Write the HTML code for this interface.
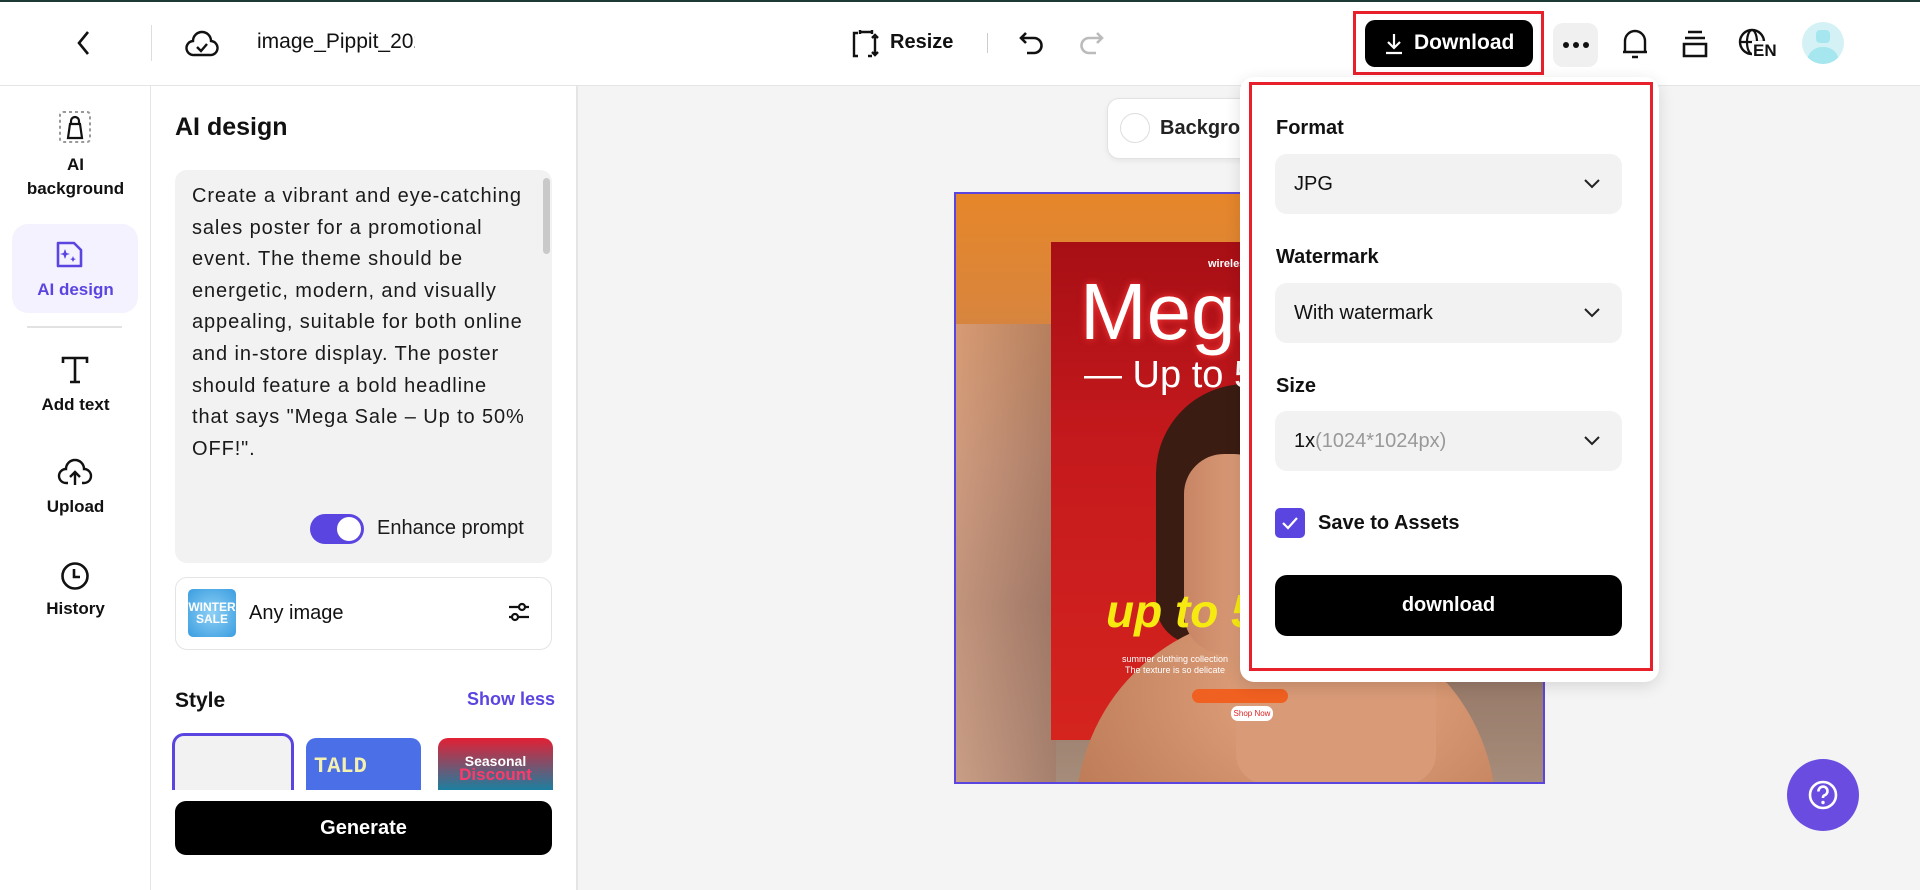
<!DOCTYPE html>
<html><head><meta charset="utf-8"><style>
*{box-sizing:border-box;margin:0;padding:0}
body{width:1920px;height:890px;overflow:hidden;background:#fff;font-family:"Liberation Sans",Arial,sans-serif;color:#111;position:relative}
.a{position:absolute}
.t{position:absolute;white-space:nowrap}
svg{position:absolute;overflow:visible}
.lbl{font-size:20px;font-weight:bold;color:#111}
.sel{position:absolute;left:1275px;width:347px;height:60px;background:#f2f2f2;border-radius:12px;font-size:20px;padding-left:19px;line-height:60px}
.rail{position:absolute;width:151px;text-align:center;font-size:17px;font-weight:bold;color:#111}
</style></head><body>
<div class="a" style="left:0;top:0;width:1920px;height:2px;background:#1e3a36"></div>
<div class="a" style="left:0;top:85px;width:1920px;height:1px;background:#e5e5e5"></div>
<!-- top bar -->
<svg style="left:74px;top:30px" width="20" height="26" viewBox="0 0 20 26"><path d="M14 2 L5 13 L14 24" fill="none" stroke="#111" stroke-width="2.6"/></svg>
<div class="a" style="left:151px;top:25px;width:1px;height:36px;background:#ddd"></div>
<svg style="left:185px;top:28px" width="34" height="30" viewBox="0 0 34 30"><path d="M9 27 H25 A7 7 0 0 0 26 13 A9 9 0 0 0 8 13 A7 7 0 0 0 9 27Z" fill="none" stroke="#111" stroke-width="2.4"/><path d="M12 19 L16 23 L22 16" fill="none" stroke="#111" stroke-width="2.4"/></svg>
<div class="t" style="left:257px;top:30px;font-size:21px;width:158px;overflow:hidden">image_Pippit_2025</div>
<svg style="left:850px;top:29px" width="30" height="30" viewBox="0 0 30 30"><path d="M8 4 H4 V27 H8 M4 4 M10 3 H22 M10 1 V5 M22 1 V5 M25 8 V26 M22 9 L25 6 L28 9 M22 23 L25 26 L28 23 M18 27 H22" fill="none" stroke="#111" stroke-width="2.4"/></svg>
<div class="t" style="left:890px;top:31px;font-size:20px;font-weight:bold">Resize</div>
<div class="a" style="left:987px;top:33px;width:1px;height:20px;background:#ccc"></div>
<svg style="left:1018px;top:30px" width="28" height="26" viewBox="0 0 28 26"><path d="M8 3 L3 8 L8 13 M3 8 H16 A7.5 7.5 0 0 1 16 23 H9" fill="none" stroke="#111" stroke-width="2.6"/></svg>
<svg style="left:1077px;top:30px" width="28" height="26" viewBox="0 0 28 26"><path d="M20 3 L25 8 L20 13 M25 8 H12 A7.5 7.5 0 0 0 12 23 H19" fill="none" stroke="#bbb" stroke-width="2.6"/></svg>
<div class="a" style="left:1353px;top:11px;width:191px;height:64px;border:3px solid #e8202c"></div>
<div class="a" style="left:1365px;top:20px;width:168px;height:47px;background:#000;border-radius:10px"></div>
<svg style="left:1384px;top:33px" width="20" height="22" viewBox="0 0 20 22"><path d="M10 1 V15 M4 9 L10 15 L16 9 M2 20 H18" fill="none" stroke="#fff" stroke-width="2.2"/></svg>
<div class="t" style="left:1414px;top:31px;font-size:21px;font-weight:bold;color:#fff">Download</div>
<div class="a" style="left:1553px;top:23px;width:45px;height:44px;background:#f0f0f0;border-radius:10px"></div>
<div class="a" style="left:1563px;top:42px;width:6px;height:6px;border-radius:3px;background:#111;box-shadow:10px 0 #111,20px 0 #111"></div>
<svg style="left:1619px;top:26px" width="32" height="34" viewBox="0 0 32 34"><path d="M6 26 V15 A10 10 0 0 1 26 15 V26 H4 H28 M13 31 H19" fill="none" stroke="#111" stroke-width="2.4"/></svg>
<svg style="left:1680px;top:29px" width="30" height="30" viewBox="0 0 30 30"><path d="M8 3 H22 M5 9 H25 M4 15 H26 V27 H4 Z" fill="none" stroke="#111" stroke-width="2.6"/></svg>
<svg style="left:1737px;top:27px" width="34" height="34" viewBox="0 0 34 34"><circle cx="15" cy="15" r="12" fill="none" stroke="#111" stroke-width="2.4"/><ellipse cx="15" cy="15" rx="5" ry="12" fill="none" stroke="#111" stroke-width="2.2"/><path d="M3 15 H27" stroke="#111" stroke-width="2.2"/></svg>
<div class="t" style="left:1752px;top:41px;font-size:17px;font-weight:bold;background:#fff;padding:0 1px">EN</div>
<div class="a" style="left:1802px;top:22px;width:42px;height:42px;border-radius:21px;background:#d4f2f5;overflow:hidden"><div class="a" style="left:14px;top:8px;width:14px;height:13px;background:#a6e6ef;border-radius:4px"></div><div class="a" style="left:5px;top:25px;width:32px;height:30px;background:#a6e6ef;border-radius:16px"></div></div>
<!-- left rail -->
<div class="a" style="left:150px;top:86px;width:1px;height:804px;background:#e5e5e5"></div>
<svg style="left:58px;top:110px" width="34" height="34" viewBox="0 0 34 34"><rect x="2" y="2" width="30" height="30" rx="3" fill="none" stroke="#999" stroke-width="2" stroke-dasharray="3 3"/><path d="M10 28 L12 14 H22 L24 28 Z M13 14 V11 A4 4 0 0 1 21 11 V14" fill="none" stroke="#111" stroke-width="2.2"/></svg>
<div class="rail" style="left:0;top:153px;line-height:24px">AI<br>background</div>
<div class="a" style="left:12px;top:224px;width:126px;height:89px;background:#f4f2ff;border-radius:16px"></div>
<svg style="left:54px;top:240px" width="30" height="30" viewBox="0 0 30 30"><path d="M4 3 H20 L27 10 V26 H4 Z" fill="none" stroke="#5b45e0" stroke-width="2.6" stroke-linejoin="round"/><path d="M11 9 L12.5 13 L16 14 L12.5 15 L11 19 L9.5 15 L6 14 L9.5 13 Z M19 16 L20 18.5 L22 19 L20 20 L19 22 L18 20 L16 19 L18 18.5Z" fill="#5b45e0"/></svg>
<div class="rail" style="left:0;top:280px;color:#5b45e0">AI design</div>
<div class="a" style="left:27px;top:326px;width:95px;height:2px;background:#e2e2e2"></div>
<svg style="left:60px;top:355px" width="30" height="30" viewBox="0 0 30 30"><path d="M3 8 V3 H27 V8 M15 3 V27 M10 27 H20" fill="none" stroke="#111" stroke-width="2.6"/></svg>
<div class="rail" style="left:0;top:395px">Add text</div>
<svg style="left:58px;top:458px" width="34" height="30" viewBox="0 0 34 30"><path d="M10 25 H8 A7 7 0 0 1 8 11 A9 9 0 0 1 26 11 A7 7 0 0 1 26 25 H24 M17 27 V15 M12 19 L17 14 L22 19" fill="none" stroke="#111" stroke-width="2.4"/></svg>
<div class="rail" style="left:0;top:497px">Upload</div>
<svg style="left:59px;top:560px" width="32" height="32" viewBox="0 0 32 32"><circle cx="16" cy="16" r="12.5" fill="none" stroke="#111" stroke-width="2.6"/><path d="M15 9 V17 H21" fill="none" stroke="#111" stroke-width="2.6"/></svg>
<div class="rail" style="left:0;top:599px">History</div>
<!-- panel -->
<div class="a" style="left:577px;top:86px;width:1343px;height:804px;background:#f4f4f4;border-left:1px solid #e5e5e5"></div>
<div class="t" style="left:175px;top:113px;font-size:25px;font-weight:bold">AI design</div>
<div class="a" style="left:175px;top:170px;width:377px;height:393px;background:#f2f2f2;border-radius:12px"></div>
<div class="a" style="left:543px;top:178px;width:7px;height:76px;background:#c9c9c9;border-radius:4px"></div>
<div class="a" style="left:192px;top:181px;width:345px;font-size:20px;letter-spacing:0.9px;line-height:31.6px;color:#1a1a1a;white-space:nowrap">Create a vibrant and eye-catching<br>sales poster for a promotional<br>event. The theme should be<br>energetic, modern, and visually<br>appealing, suitable for both online<br>and in-store display. The poster<br>should feature a bold headline<br>that says "Mega Sale – Up to 50%<br>OFF!".</div>
<div class="a" style="left:310px;top:514px;width:54px;height:30px;background:#5b45e0;border-radius:15px"><div class="a" style="left:27px;top:3px;width:24px;height:24px;background:#fff;border-radius:12px"></div></div>
<div class="t" style="left:377px;top:517px;font-size:20px;color:#1a1a1a">Enhance prompt</div>
<div class="a" style="left:175px;top:577px;width:377px;height:73px;border:1px solid #e4e4e4;border-radius:12px"></div>
<div class="a" style="left:188px;top:589px;width:48px;height:48px;border-radius:5px;background:radial-gradient(circle,#8ed0f5,#3a9de0);color:#fff;font-size:12px;font-weight:bold;text-align:center;line-height:12px;padding-top:12px">WINTER<br>SALE</div>
<div class="t" style="left:249px;top:602px;font-size:20px">Any image</div>
<svg style="left:507px;top:600px" width="24" height="24" viewBox="0 0 24 24"><path d="M2 7 H22 M2 17 H22" stroke="#111" stroke-width="2.2"/><circle cx="15" cy="7" r="3" fill="#fff" stroke="#111" stroke-width="2.2"/><circle cx="8" cy="17" r="3" fill="#fff" stroke="#111" stroke-width="2.2"/></svg>
<div class="t" style="left:175px;top:689px;font-size:21px;font-weight:bold">Style</div>
<div class="t" style="left:467px;top:689px;font-size:18px;font-weight:bold;color:#5b45e0">Show less</div>
<div class="a" style="left:172px;top:733px;width:122px;height:57px;border:3px solid #5b45e0;border-bottom:none;border-radius:12px 12px 0 0;background:#f2f2f2"></div>
<div class="a" style="left:306px;top:738px;width:115px;height:52px;background:#4b6fe6;border-radius:10px 10px 0 0;color:#f4f0b0;font-weight:bold;font-size:22px;padding:16px 0 0 8px;font-family:'Liberation Mono',monospace">TALD</div>
<div class="a" style="left:438px;top:738px;width:115px;height:52px;background:linear-gradient(#e22035,#1c7fa0);border-radius:10px 10px 0 0;text-align:center;font-weight:bold;font-size:14px;color:#fff;padding-top:16px;line-height:14px">Seasonal<br><span style="color:#ff3a6a;font-size:17px">Discount</span></div>
<div class="a" style="left:151px;top:790px;width:425px;height:100px;background:#fff"></div>
<div class="a" style="left:175px;top:801px;width:377px;height:54px;background:#000;border-radius:11px;color:#fff;font-size:20px;font-weight:bold;text-align:center;line-height:54px">Generate</div>
<div class="a" style="left:576px;top:86px;width:1px;height:804px;background:#e5e5e5"></div>
<!-- canvas -->
<div class="a" style="left:1107px;top:98px;width:160px;height:61px;background:#fff;border:1px solid #e2e2e2;border-radius:12px;box-shadow:0 2px 6px rgba(0,0,0,.06)"></div>
<div class="a" style="left:1120px;top:113px;width:30px;height:30px;border:1px solid #ddd;border-radius:15px"></div>
<div class="t" style="left:1160px;top:117px;font-size:20px;font-weight:bold;color:#222">Background</div>
<div class="a" style="left:954px;top:192px;width:591px;height:592px;border:2px solid #5b45e0;overflow:hidden;background:linear-gradient(180deg,#e6862a 0%,#d9853c 20%,#b88060 45%,#8d6c5c 70%,#a68c7a 100%)">
 <div class="a" style="left:0;top:130px;width:100px;height:460px;background:linear-gradient(90deg,#d8a58a,#a57a68);opacity:.7"></div>
 <div class="a" style="left:95px;top:48px;width:396px;height:498px;background:linear-gradient(180deg,#a70f15 0%,#c4191d 40%,#d5241e 100%)"></div>
 <div class="a" style="left:200px;top:190px;width:190px;height:260px;border-radius:90px 90px 40px 40px;background:#3a1c12"></div>
 <div class="a" style="left:120px;top:420px;width:420px;height:260px;border-radius:200px 200px 0 0;background:radial-gradient(ellipse at 60% 30%,#e6a983,#b36f4c)"></div>
 <div class="a" style="left:228px;top:260px;width:90px;height:200px;border-radius:40px;background:linear-gradient(90deg,#c88565,#e3a681)"></div>
 <div class="a" style="left:280px;top:400px;width:200px;height:190px;background:#d89a77;border-radius:30px"></div>
 <div class="t" style="left:252px;top:64px;font-size:11px;font-weight:bold;color:#fff">wireless</div>
 <div class="t" style="left:124px;top:72px;font-size:80px;color:#fff;text-shadow:0 0 8px #ff3b3b">Mega</div>
 <div class="t" style="left:128px;top:160px;font-size:38px;color:#fff">— Up to 50%</div>
 <div class="t" style="left:150px;top:390px;font-size:46px;font-weight:bold;font-style:italic;color:#f7ea10">up to 50%</div>
 <div class="t" style="left:166px;top:460px;font-size:9px;color:#fff;line-height:11px;text-align:center">summer clothing collection<br>The texture is so delicate</div>
 <div class="a" style="left:236px;top:495px;width:96px;height:14px;background:#f06020;border-radius:7px"></div>
 <div class="a" style="left:275px;top:512px;width:42px;height:15px;background:#fff;border-radius:7px;font-size:8px;color:#d22;text-align:center;line-height:15px">Shop Now</div>
</div>
<!-- dropdown -->
<div class="a" style="left:1240px;top:77px;width:419px;height:605px;background:#fff;border-radius:14px;box-shadow:0 4px 16px rgba(0,0,0,.12)"></div>
<div class="a" style="left:1249px;top:82px;width:404px;height:589px;border:3px solid #e8202c"></div>
<div class="t lbl" style="left:1276px;top:117px">Format</div>
<div class="sel" style="top:154px">JPG</div>
<div class="t lbl" style="left:1276px;top:246px">Watermark</div>
<div class="sel" style="top:283px">With watermark</div>
<div class="t lbl" style="left:1276px;top:375px">Size</div>
<div class="sel" style="top:411px">1x<span style="color:#999">(1024*1024px)</span></div>
<svg style="left:1583px;top:178px" width="18" height="12" viewBox="0 0 18 12"><path d="M2 2 L9 9 L16 2" fill="none" stroke="#222" stroke-width="2"/></svg>
<svg style="left:1583px;top:307px" width="18" height="12" viewBox="0 0 18 12"><path d="M2 2 L9 9 L16 2" fill="none" stroke="#222" stroke-width="2"/></svg>
<svg style="left:1583px;top:435px" width="18" height="12" viewBox="0 0 18 12"><path d="M2 2 L9 9 L16 2" fill="none" stroke="#222" stroke-width="2"/></svg>
<div class="a" style="left:1275px;top:508px;width:30px;height:30px;background:#5b45e0;border-radius:5px"></div>
<svg style="left:1281px;top:515px" width="18" height="16" viewBox="0 0 18 16"><path d="M2 8 L7 13 L16 3" fill="none" stroke="#fff" stroke-width="2.2"/></svg>
<div class="t" style="left:1318px;top:512px;font-size:20px;font-weight:bold;color:#111">Save to Assets</div>
<div class="a" style="left:1275px;top:575px;width:347px;height:61px;background:#000;border-radius:12px;color:#fff;font-size:20px;font-weight:bold;text-align:center;line-height:61px">download</div>
<!-- help -->
<div class="a" style="left:1787px;top:759px;width:72px;height:72px;border-radius:36px;background:#6a4de0"></div>
<svg style="left:1807px;top:779px" width="32" height="32" viewBox="0 0 32 32"><circle cx="16" cy="16" r="13" fill="none" stroke="#fff" stroke-width="2.6"/><path d="M11.5 12.5 A4.5 4.5 0 1 1 17 16.5 C16 17 16 18 16 19" fill="none" stroke="#fff" stroke-width="2.6"/><circle cx="16" cy="23.5" r="1.7" fill="#fff"/></svg>
</body></html>
